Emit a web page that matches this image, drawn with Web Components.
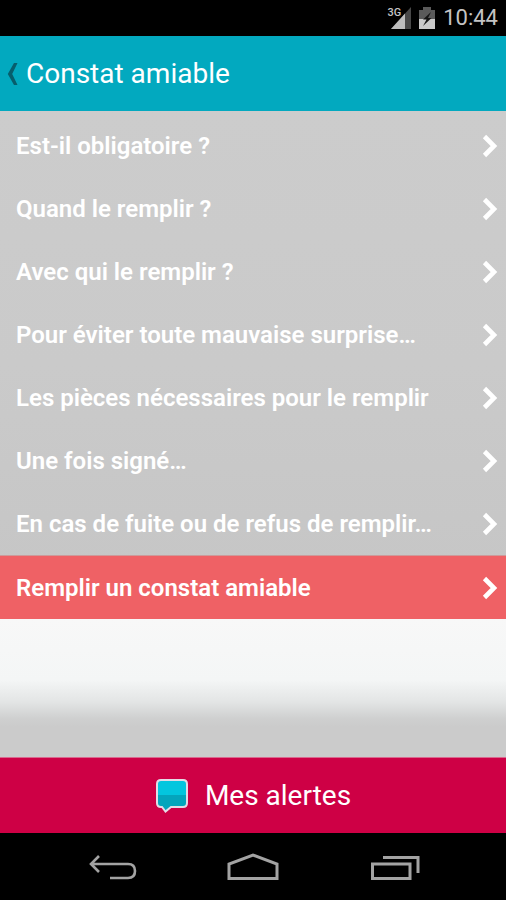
<!DOCTYPE html>
<html lang="fr">
<head>
<meta charset="UTF-8">
<meta name="viewport" content="width=device-width, initial-scale=1.0">
<title>Constat amiable</title>
<style>
  body {
    margin: 0;
    background-color: #000;
    font-family: Roboto, "Liberation Sans", sans-serif;
    color: white;
  }
</style>
</head>
<body>
<constat-app>
  <status-bar slot="top">10:44</status-bar>
  <title-bar slot="top">Constat amiable</title-bar>
  <menu-item href="#obligatoire">Est-il obligatoire ?</menu-item>
  <menu-item href="#quand">Quand le remplir ?</menu-item>
  <menu-item href="#qui">Avec qui le remplir ?</menu-item>
  <menu-item href="#surprise">Pour éviter toute mauvaise surprise…</menu-item>
  <menu-item href="#pieces">Les pièces nécessaires pour le remplir</menu-item>
  <menu-item href="#signe">Une fois signé…</menu-item>
  <menu-item href="#fuite">En cas de fuite ou de refus de remplir…</menu-item>
  <menu-item href="#remplir" data-primary>Remplir un constat amiable</menu-item>
  <alert-bar slot="bottom">Mes alertes</alert-bar>
  <system-nav slot="bottom"></system-nav>
</constat-app>

<script>
class ConstatApp extends HTMLElement {
  connectedCallback() {
    this.attachShadow({ mode: 'open' });
    this.shadowRoot.innerHTML = `
      <style>
        :host {
          display: flex;
          flex-direction: column;
          min-height: 100vh;
        }
        main {
          flex: 1;
          display: flex;
          flex-direction: column;
          background-color: #c9c9c9;
        }
        nav {
          padding-top: 3px;
          background: linear-gradient(#cccccc, #cacaca 50%, #c5c5c5);
        }
        .fade {
          flex: 1;
          background: linear-gradient(#f8f8f8, #f4f6f6 44%, #e3e5e5 60%, #cfd0d0 72%, #cbcbcb 78%);
        }
      </style>
      <slot name="top"></slot>
      <main>
        <nav><slot></slot></nav>
        <div class="fade"></div>
      </main>
      <slot name="bottom"></slot>
    `;
  }
}

class StatusBar extends HTMLElement {
  connectedCallback() {
    this.attachShadow({ mode: 'open' });
    this.shadowRoot.innerHTML = `
      <style>
        :host {
          display: flex;
          align-items: center;
          justify-content: flex-end;
          gap: 8px;
          height: 36px;
          padding-right: 8px;
          background-color: black;
          color: #c4c4c4;
          font-size: 22px;
          line-height: 38px;
        }
        .signal {
          display: flex;
          align-items: flex-start;
        }
        .network {
          font-size: 11px;
          line-height: 12px;
          font-weight: 500;
          margin-right: -10px;
        }
        svg {
          display: block;
        }
      </style>
      <div class="signal">
        <span class="network">3G</span>
        <svg width="20" height="22" viewBox="0 0 20 22" aria-hidden="true">
          <path d="M20 0v22H0z" fill="#484848"/>
          <path d="M14 6.6V22H0z" fill="#bdbdbd"/>
        </svg>
      </div>
      <svg width="16" height="22" viewBox="0 0 16 22" aria-hidden="true">
        <path d="M4 0h8v3h4v9H0V3h4z" fill="#5a5a5a"/>
        <path d="M0 12h16v10H0z" fill="#c9c9c9"/>
        <path d="M12 5L4 12.5h3.5L4 19l8.5-8H9z" fill="#151515"/>
      </svg>
      <time><slot></slot></time>
    `;
  }
}

class TitleBar extends HTMLElement {
  connectedCallback() {
    this.attachShadow({ mode: 'open' });
    this.shadowRoot.innerHTML = `
      <style>
        :host {
          display: flex;
          align-items: center;
          gap: 8px;
          height: 75px;
          padding-left: 7px;
          background-color: #02a9bf;
        }
        button {
          border: 0;
          padding: 0;
          background: none;
        }
        svg {
          display: block;
        }
        h1 {
          margin: 0;
          font-size: 28px;
          line-height: 36px;
          font-weight: 400;
        }
      </style>
      <button type="button" aria-label="Retour">
        <svg width="11" height="24" viewBox="0 0 11 24">
          <path d="M7 1h3.500L5.200 12l5.300 11H7L.800 12z" fill="#075e6c"/>
        </svg>
      </button>
      <h1><slot></slot></h1>
    `;
  }
}

class MenuItem extends HTMLElement {
  connectedCallback() {
    this.attachShadow({ mode: 'open' });
    this.shadowRoot.innerHTML = `
      <style>
        :host {
          display: block;
        }
        a {
          display: flex;
          align-items: center;
          justify-content: space-between;
          height: 63px;
          padding: 0 8px 0 16px;
          color: white;
          text-decoration: none;
          font-size: 24px;
          line-height: 30px;
          font-weight: 600;
        }
        :host([data-primary]) {
          border-top: 1px solid #cd9a9a;
        }
        :host([data-primary]) a {
          background-color: #ef6165;
        }
        svg {
          flex: none;
        }
      </style>
      <a href="${this.getAttribute('href')}">
        <slot></slot>
        <svg width="16" height="24" viewBox="0 0 16 24" aria-hidden="true">
          <path d="M2.500 2.500L12 12l-9.500 9.500" fill="none" stroke="white" stroke-width="4.600"/>
        </svg>
      </a>
    `;
  }
}

class AlertBar extends HTMLElement {
  connectedCallback() {
    this.attachShadow({ mode: 'open' });
    this.shadowRoot.innerHTML = `
      <style>
        :host {
          display: block;
        }
        button {
          display: flex;
          align-items: center;
          justify-content: center;
          gap: 16px;
          width: 100%;
          height: 76px;
          padding: 0;
          border: 0;
          border-top: 1px solid #d9698f;
          background-color: #ce0045;
          color: white;
          font-family: inherit;
          font-size: 28px;
          line-height: 36px;
        }
      </style>
      <button type="button">
        <svg width="34" height="36" viewBox="0 0 34 36" aria-hidden="true">
          <path d="M6 2h22q4 0 4 4v19q0 4-4 4H16l-5.500 4.500L7 29H6q-4 0-4-4V6q0-4 4-4z" fill="#03c6de"/>
          <path d="M2 17h30v8q0 4-4 4H16l-5.500 4.500L7 29H6q-4 0-4-4z" fill="#04a5bc"/>
          <path d="M6 2h22q4 0 4 4v19q0 4-4 4H16l-5.500 4.500L7 29H6q-4 0-4-4V6q0-4 4-4z" fill="none" stroke="#e3dce6" stroke-width="2"/>
        </svg>
        <slot></slot>
      </button>
    `;
  }
}

class SystemNav extends HTMLElement {
  connectedCallback() {
    this.attachShadow({ mode: 'open' });
    this.shadowRoot.innerHTML = `
      <style>
        :host {
          display: flex;
          height: 67px;
          padding: 0 40px;
          background-color: black;
        }
        button {
          flex: 1;
          display: flex;
          align-items: center;
          justify-content: center;
          padding: 2px 0 0;
          border: 0;
          background: none;
        }
        svg {
          fill: none;
          stroke: #a3a3a3;
          stroke-width: 3;
        }
      </style>
      <button type="button" aria-label="Précédent">
        <svg width="52" height="30" viewBox="0 0 52 30">
          <path d="M14 3L6 11l8 8M7 11h36q7 0 7 7t-7 7H25" stroke-width="2.600"/>
        </svg>
      </button>
      <button type="button" aria-label="Accueil">
        <svg width="52" height="30" viewBox="0 0 52 30">
          <path d="M2 25.500V11L26 2l24 9v14.500z"/>
        </svg>
      </button>
      <button type="button" aria-label="Applications récentes">
        <svg width="52" height="30" viewBox="0 0 52 30">
          <path d="M3.500 11H41v14.500H3.500zM14 4.500h35V20"/>
        </svg>
      </button>
    `;
  }
}

customElements.define('constat-app', ConstatApp);
customElements.define('status-bar', StatusBar);
customElements.define('title-bar', TitleBar);
customElements.define('menu-item', MenuItem);
customElements.define('alert-bar', AlertBar);
customElements.define('system-nav', SystemNav);
</script>
</body>
</html>
